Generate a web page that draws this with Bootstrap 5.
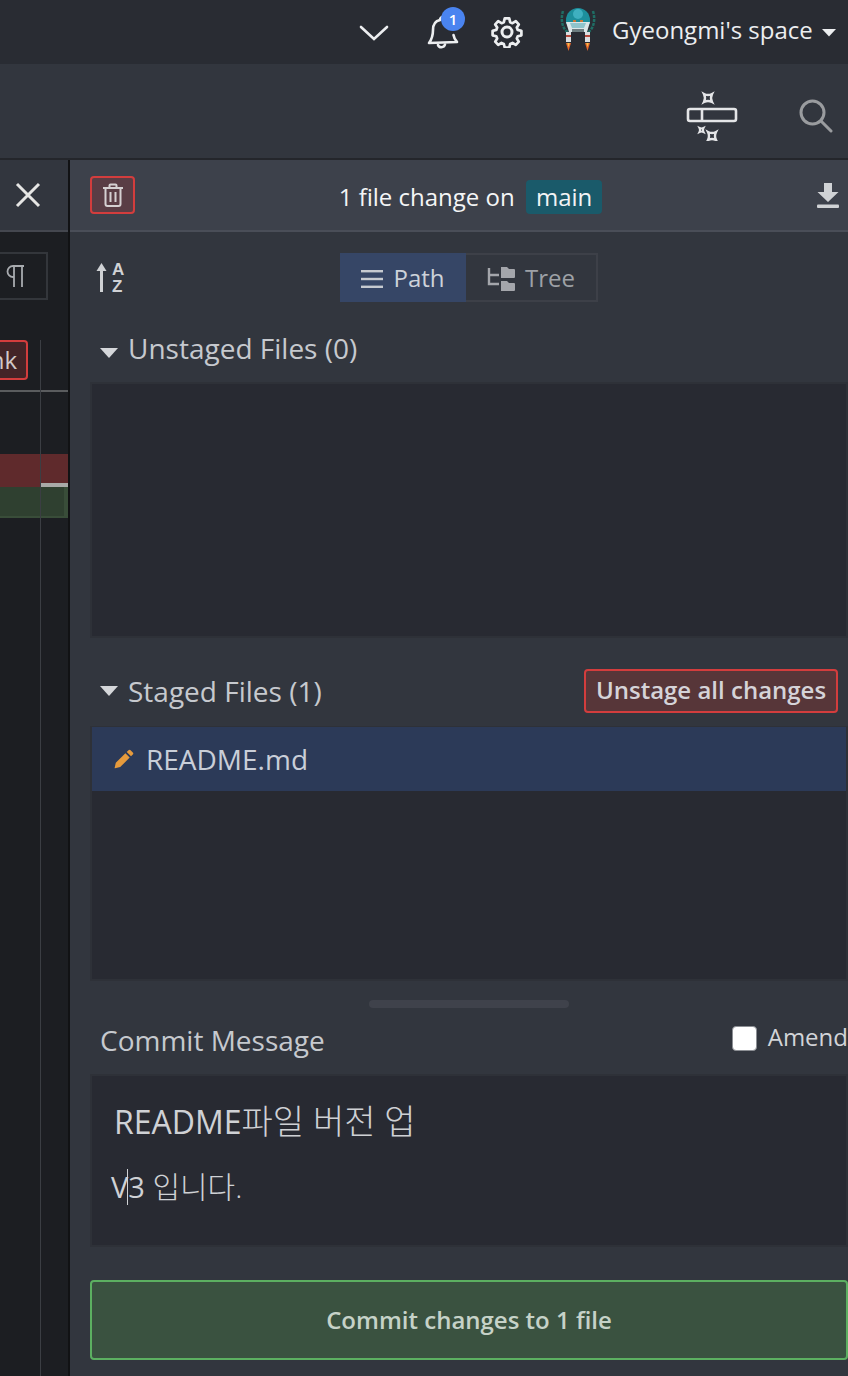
<!DOCTYPE html>
<html lang="en">
<head>
<meta charset="utf-8">
<title>Commit panel</title>
<link rel="stylesheet" href="https://cdn.jsdelivr.net/npm/bootstrap@5.3.0/dist/css/bootstrap.min.css">
<style>
html,body{height:1376px;overflow:hidden}
body{background:#32363e;color:#d0d3d8;font-family:"Open Sans","Noto Sans CJK KR",sans-serif;font-size:26px;line-height:1.2}
.top-strip{height:64px;background:#292c33;color:#eceef0;padding-left:358px}
.top-strip .user-name{font-size:24px;margin-left:16px;white-space:nowrap;margin-top:-4px}
.tool-strip{height:96px;background:#32363e;border-bottom:2px solid #24262b;padding-right:15px}
.search-glyph{margin-left:60px;margin-top:10px}
.work{height:1216px}
.left-pane{width:70px;flex:none;background:#1c1e22;border-right:2px solid #111214;position:relative;overflow:hidden}
.left-pane::after{content:"";position:absolute;left:40px;top:180px;bottom:0;width:1px;background:#3b3e43}
.left-head{height:72px;background:#32363e;border-bottom:2px solid #44474f;padding-right:27px}
.pilcrow-wrap{height:108px;padding-top:20px}
.pilcrow-box{width:48px;height:48px;border:2px solid #33363b;border-left:0;padding-left:6px}
.hunk-btn{width:28px;height:40px;background:#432427;border:2px solid #d33d3d;border-left:0;border-radius:0 4px 4px 0;color:#d2c8c8;font-size:24px;padding-right:9px;justify-content:flex-end}
.hunk-row{height:52px;border-bottom:2px solid #5a5c5e}
.diff-gap{height:62px}
.diff-del{height:33px;background:#5f2a2c}
.diff-add{height:31px;background:#2f4030;border-right:4px solid #394d39;border-bottom:2px solid #394d39;position:relative}
.diff-mark{position:absolute;left:41px;top:-4px;right:-4px;height:4px;background:#a9aaa8}
.main-pane{flex:1 1 0;min-width:0}
.file-head{height:72px;background:#3d414b;border-bottom:2px solid #4a4e58;padding:0 8px 0 20px;position:relative}
.file-title{color:#f4f5f6;font-size:24px;flex:1;text-align:center;padding:4px 10px 0 0}
.branch-tag{display:inline-block;background:#1a5a6a;color:#f2f4f5;border-radius:4px;padding:0 10px;margin-left:5px;line-height:34px;height:34px}
.trash-btn{width:45px;height:38px;background:#5a3d45;border:2px solid #d33d3d;border-radius:4px;padding:0}
.view-row{height:70px;padding-left:26px;padding-right:250px;padding-top:21px;align-items:flex-start}
.sort-wrap{width:30px;height:40px;flex:none;gap:5px;padding-top:10px}
.sort-letters{font:700 17px/17px "Liberation Sans",sans-serif;color:#d0d2d5;margin-top:-2px}
.seg-group{margin-left:214px;height:49px;border:2px solid #3d4048}
.seg-path{width:126px;margin:-2px 0 -2px -2px;background:#364666;color:#cdd2da}
.seg-tree{width:130px;color:#9ea1a6}
.seg-path,.seg-tree{font-size:24px;gap:10px;padding-top:2px}
.sec-head{color:#c6c9ce;font-size:28px;padding-left:30px;gap:10px}
.sec-head-a{height:80px;padding-top:30px}
.caret-icon{width:18px;height:10px;flex:none}
.file-box{margin-left:20px;height:255px;background:#282a32;border:2px solid #2e3138}
.sec-head-a + .file-box{height:256px}
.sec-head-b{height:88px;padding-right:10px;padding-top:17px}
.stage-label{flex:1;padding-top:2px}
.unstage-btn{width:254px;height:44px;background:#573639;border:2px solid #d33d3d;border-radius:4px;color:#d5d3d8;font-size:24px;font-weight:600;padding:0;white-space:nowrap}
.file-row{height:64px;background:#2c3a58;padding-left:22px;gap:12px;color:#c9ced8;font-size:28px;margin-top:-1px}
.file-row span{padding-top:2px}
.grip-wrap{height:43px;padding-top:19px;padding-left:299px}
.grip-bar{width:200px;height:8px;background:#3f424b;border-radius:4px}
.msg-head{height:50px;padding-left:30px}
.msg-label{font-size:28px;flex:1;color:#c6c9ce}
.amend-box{font-size:24px;gap:11px;color:#d2d4d8;margin-top:-1px;white-space:nowrap}
.amend-check{width:25px;height:25px;background:#fff;border:1px solid #8c8f94;border-radius:4px;flex:none;margin-top:2px}
.msg-box{margin-left:20px;height:173px;background:#282a32;border:2px solid #2e3138;padding:25px 0 0 22px;color:#cfd1d5}
.msg-title{font-size:32px;line-height:40px}
.msg-title .ko-run{font-size:34px;font-weight:300}
.msg-body{font-size:29px;line-height:40px;margin:25px 0 0 -3px;position:relative}
.msg-body .ko-run{font-size:30px;font-weight:300}
.caret-bar{position:absolute;left:16px;top:2px;width:1px;height:36px;background:#cfd1d5}
.commit-btn{display:block;width:calc(100% - 20px);margin:33px 0 0 20px;height:80px;background:#3a5240;border:2px solid #5cb061;border-radius:4px;color:#c6d2c8;font-size:24px;font-weight:600}
svg{display:block}
</style>
</head>
<body>
<header class="top-strip d-flex align-items-center">
  <svg width="32" height="20" viewBox="0 0 32 20" fill="none" stroke="#eceef0" stroke-width="2.6" stroke-linecap="round"><path d="M3 5l13 12L29 5"/></svg>
  <span class="position-relative" style="margin-left:37px">
    <svg width="34" height="36" viewBox="0 0 34 36" fill="none" stroke="#eceef0" stroke-width="2.6" stroke-linejoin="round" stroke-linecap="round"><path d="M13 6C8 7 6 11 6 16c0 5-1 9-4 13l28-1c-2-2-3-4-3.500-7"/><path d="M13 6c0-2 2-4 4-3"/><path d="M11 31c1 3 6 3 7-.500"/></svg>
    <span class="position-absolute rounded-circle d-flex align-items-center justify-content-center" style="left:14px;top:-7px;width:24px;height:24px;background:#4a84f0;color:#fff;font-size:15px;font-weight:600">1</span>
  </span>
  <span style="margin-left:30px">
    <svg width="32" height="32" viewBox="0 0 32 32" fill="none" stroke="#eceef0" stroke-width="3" stroke-linejoin="round"><circle cx="16" cy="16" r="5"/><path d="M13.500 2h5l1 4.200 2.600 1.100 3.700-2.200 3.300 3.600-2.200 3.500 1 2.600 4.100 1v5l-4.100 1-1 2.600 2.200 3.500-3.300 3.600-3.700-2.200-2.600 1.100-1 4.100h-5l-1-4.100-2.600-1.100-3.700 2.200-3.300-3.600 2.200-3.500-1-2.600-4.100-1v-5l4.100-1 1-2.600-2.200-3.500 3.300-3.600 3.700 2.200 2.600-1.100z" transform="translate(1.600 .6) scale(.9)"/></svg>
  </span>
  <span style="margin-left:37px">
    <svg width="36" height="52" viewBox="0 0 36 52">
      <path d="M3 5C0 15 3 24 9 27M33 5c3 10 0 19-6 22" fill="none" stroke="#1f6d64" stroke-width="2.500" stroke-dasharray="3 1"/>
      <path d="M6 14a12 12 0 0 1 24 0v4H6z" fill="#1d8f9c"/>
      <circle cx="18" cy="8" r="5" fill="#3fb0c0"/>
      <path d="M6 16h24l-3 10H9z" fill="#dbe6e8"/>
      <path d="M10 17h16l-2 5H12z" fill="#8fc4cc"/>
      <rect x="12" y="23" width="12" height="3" fill="#6d7d80"/>
      <rect x="13" y="14" width="3" height="2" fill="#c77a3a"/><rect x="20" y="14" width="3" height="2" fill="#c77a3a"/>
      <rect x="6" y="26" width="5" height="10" fill="#d9dde0"/><rect x="25" y="26" width="5" height="10" fill="#d9dde0"/>
      <rect x="6" y="29" width="5" height="2" fill="#b5483a"/><rect x="25" y="29" width="5" height="2" fill="#b5483a"/>
      <path d="M6 37h5l-2.500 8z" fill="#e8662c"/><path d="M25 37h5l-2.500 8z" fill="#e8662c"/>
      <path d="M7.300 37h2.400l-1.200 4z" fill="#f4c04a"/><path d="M26.300 37h2.400l-1.200 4z" fill="#f4c04a"/>
    </svg>
  </span>
  <span class="user-name">Gyeongmi's space</span>
  <svg class="ms-2" width="16" height="9" viewBox="0 0 16 9"><path d="M1 1h14L8 8.500z" fill="#eceef0"/></svg>
</header>
<div class="tool-strip d-flex align-items-center justify-content-end">
  <svg width="54" height="60" viewBox="0 0 54 60" fill="none" stroke="#e4e5e7">
    <rect x="3" y="28" width="48" height="12" rx="2" stroke-width="2.600"/>
    <path d="M17 28v12" stroke-width="2.600"/>
    <path d="M-4-4Q0-2 4-4 2 0 4 4 0 2-4 4-2 0-4-4z" stroke-width="2.400" transform="translate(23 17)"/>
    <path d="M-4-4Q0-2 4-4 2 0 4 4 0 2-4 4-2 0-4-4z" stroke-width="2.400" transform="translate(27 55)"/>
    <path d="M-2-2Q0-1 2-2 1 0 2 2 0 1-2 2-1 0-2-2z" stroke-width="2" transform="translate(16.500 49)"/>
  </svg>
  <svg class="search-glyph" width="34" height="34" viewBox="0 0 34 34" fill="none" stroke="#9a9c9f" stroke-width="3"><circle cx="13.500" cy="13.500" r="11.500"/><path d="M22 22l10 10" stroke-linecap="round"/></svg>
</div>
<div class="work d-flex">
  <aside class="left-pane">
    <div class="left-head d-flex align-items-center justify-content-end">
      <svg width="26" height="26" viewBox="0 0 26 26" stroke="#e6e6e4" stroke-width="3"><path d="M2 2l22 22M24 2L2 24"/></svg>
    </div>
    <div class="pilcrow-wrap"><div class="pilcrow-box d-flex align-items-center">
      <svg width="20" height="24" viewBox="0 0 20 24" fill="none" stroke="#a8abaf" stroke-width="1.800"><path d="M8 13H7a5.500 5.500 0 0 1 0-11h11M8 2v21M16 2v21"/></svg>
    </div></div>
    <div class="hunk-row"><div class="hunk-btn d-flex align-items-center">nk</div></div>
    <div class="diff-gap"></div>
    <div class="diff-del"></div>
    <div class="diff-add"><div class="diff-mark"></div></div>
  </aside>
  <main class="main-pane">
    <div class="file-head d-flex align-items-center">
      <button class="trash-btn d-flex align-items-center justify-content-center" type="button" aria-label="Discard">
        <svg width="22" height="24" viewBox="0 0 22 24" fill="none" stroke="#d5d0d2" stroke-width="2"><path d="M1 5h20M7.500 5V2.500a1 1 0 0 1 1-1h5a1 1 0 0 1 1 1V5M3.500 5v16a2 2 0 0 0 2 2h11a2 2 0 0 0 2-2V5M8.500 9v10M13.500 9v10"/></svg>
      </button>
      <div class="file-title">1 file change on <span class="branch-tag">main</span></div>
      <svg width="24" height="26" viewBox="0 0 24 26" fill="#d0d2d5"><path d="M8 1h8v9h6.500L12 20 1.500 10H8z"/><rect x="1" y="22.500" width="22" height="3.500" rx="1"/></svg>
    </div>
    <div class="view-row d-flex">
      <div class="sort-wrap d-flex">
        <svg width="11" height="30" viewBox="0 0 11 30"><path d="M5.500 29V8" stroke="#d0d2d5" stroke-width="3"/><path d="M5.500 0L.500 8h10z" fill="#d0d2d5"/></svg>
        <div class="sort-letters d-flex flex-column"><span>A</span><span>Z</span></div>
      </div>
      <div class="seg-group d-flex">
        <div class="seg-path d-flex align-items-center justify-content-center">
          <svg width="22" height="18" viewBox="0 0 22 18" fill="#c6cad0"><rect width="22" height="2.400" y="0"/><rect width="22" height="2.400" y="7.800"/><rect width="22" height="2.400" y="15.600"/></svg>
          <span>Path</span>
        </div>
        <div class="seg-tree d-flex align-items-center justify-content-center">
          <svg width="28" height="24" viewBox="0 0 28 24"><path d="M2 1v16h10M2 8h10" stroke="#a4a6ab" stroke-width="2.400" fill="none"/><path d="M14 0h6l2 2h5a1 1 0 0 1 1 1v7a1 1 0 0 1-1 1H14zM14 14h6l2 2h5a1 1 0 0 1 1 1v6a1 1 0 0 1-1 1H14z" fill="#a4a6ab"/></svg>
          <span>Tree</span>
        </div>
      </div>
    </div>
    <div class="sec-head sec-head-a d-flex align-items-start">
      <svg class="caret-icon mt-3" viewBox="0 0 18 10"><path d="M0 0h18L9 10z" fill="#d5d7da"/></svg>
      <span>Unstaged Files (0)</span>
    </div>
    <div class="file-box"></div>
    <div class="sec-head sec-head-b d-flex align-items-center">
      <svg class="caret-icon" viewBox="0 0 18 10"><path d="M0 0h18L9 10z" fill="#d5d7da"/></svg>
      <span class="stage-label">Staged Files (1)</span>
      <button class="unstage-btn" type="button">Unstage all changes</button>
    </div>
    <div class="file-box">
      <div class="file-row d-flex align-items-center">
        <svg width="20" height="20" viewBox="0 0 20 20"><path d="M14.500 1.200a1.500 1.500 0 0 1 2.100 0l2.200 2.200a1.500 1.500 0 0 1 0 2.100l-1.800 1.800-4.300-4.300zM11.400 4.300l4.300 4.300L6.200 18.100 1 19.300a.4.400 0 0 1-.4-.4l1.200-5.100z" fill="#e69a3c"/></svg>
        <span>README.md</span>
      </div>
    </div>
    <div class="grip-wrap"><div class="grip-bar"></div></div>
    <div class="msg-head d-flex align-items-start">
      <div class="msg-label">Commit Message</div>
      <div class="amend-box d-flex align-items-center">
        <span class="amend-check"></span><span>Amend</span>
      </div>
    </div>
    <div class="msg-box">
      <div class="msg-title">README<span class="ko-run">파일 버전 업</span></div>
      <div class="msg-body">V3 <span class="ko-run">입니다.</span><span class="caret-bar"></span></div>
    </div>
    <button class="commit-btn" type="button">Commit changes to 1 file</button>
  </main>
</div>
<script src="https://cdn.jsdelivr.net/npm/bootstrap@5.3.0/dist/js/bootstrap.bundle.min.js"></script>
</body>
</html>
